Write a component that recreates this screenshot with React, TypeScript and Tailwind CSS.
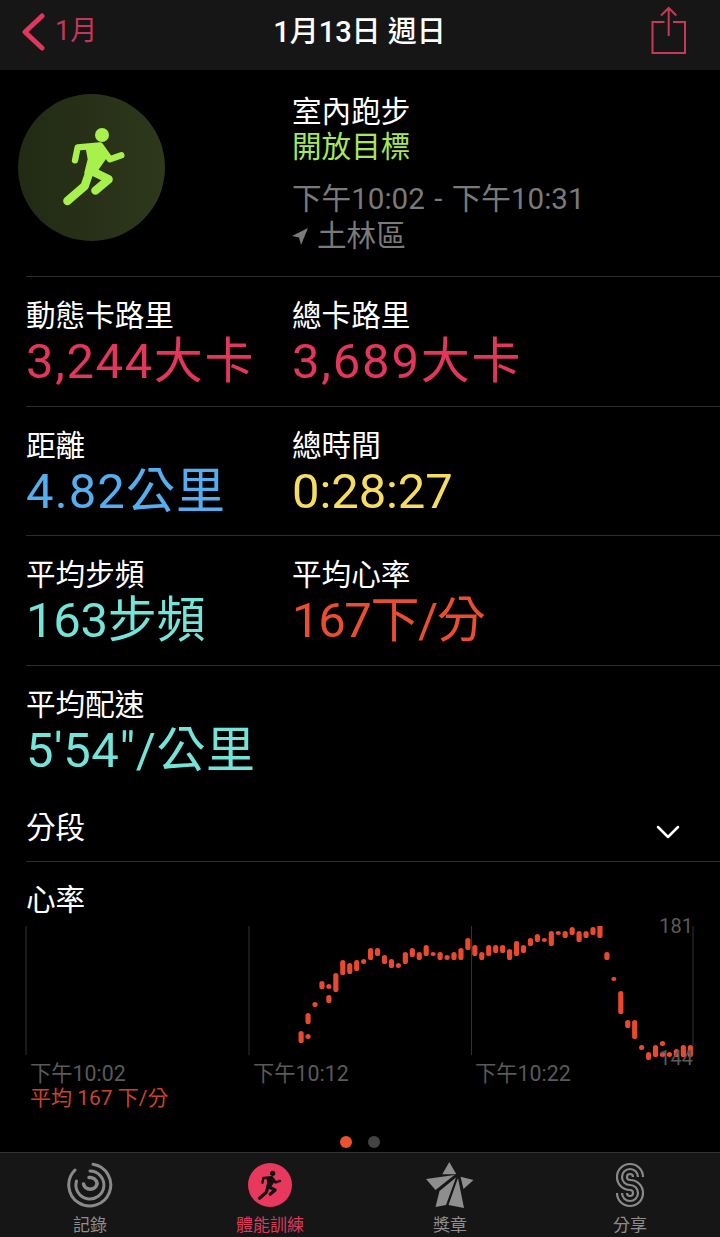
const FONT = "font-['Roboto','Noto_Sans_CJK_TC',sans-serif]";

// [top, bottom] of each heart rate mark, one group per time slot
const HEART_RATE: [number, number][][] = [
  [[1031, 1043]], [[1034, 1039], [1013, 1024]], [[1002, 1007]], [[981, 989]], [[984, 989], [995, 1003]],
  [[973, 992]], [[960, 975]], [[963, 974]], [[960, 971]], [[959, 964]], [[948, 960]], [[948, 956]],
  [[955, 964]], [[959, 968]], [[963, 968]], [[952, 964]], [[948, 957]], [[952, 960]], [[945, 956]],
  [[952, 956]], [[952, 960]], [[955, 960]], [[952, 960]], [[948, 960]], [[938, 950]], [[945, 956]],
  [[952, 960]], [[945, 956]], [[945, 953]], [[945, 953]], [[949, 960]], [[941, 956]], [[945, 953]],
  [[938, 946]], [[934, 942]], [[938, 942]], [[931, 946]], [[931, 935]], [[931, 938]], [[927, 935]],
  [[931, 942]], [[931, 938]], [[927, 935]], [[924, 938]], [[952, 960]], [[977, 981]], [[991, 1014]],
  [[1020, 1028]], [[1020, 1039]], [[1045, 1050]], [[1052, 1060]], [[1045, 1057]], [[1041, 1046], [1052, 1057]],
  [[1052, 1057]], [[1049, 1057]], [[1045, 1057]], [[1045, 1057]],
];

function Runner({ className, color }: { className: string; color: string }) {
  return (
    <svg viewBox="0 0 270 300" className={className} fill="none" stroke={color} strokeLinecap="round" strokeLinejoin="round">
      <circle cx="156" cy="57" r="21" fill={color} stroke="none" />
      <path d="M75 133 L83 94 L150 88 L180 130 L214 118" strokeWidth="19" />
      <path d="M118 170 L104 210 L52 255" strokeWidth="25" />
      <path d="M125 165 L176 190 L136 224" strokeWidth="25" />
      <path d="M112 96 L150 90 L165 125 L132 172 L108 170 L118 130 Z" fill={color} strokeWidth="10" />
    </svg>
  );
}

function Rings() {
  return (
    <svg width="46" height="46" viewBox="0 0 46 46" fill="none" stroke="#8a8a8a" strokeWidth="3" strokeLinecap="round">
      <path d="M8 8 A 21 21 0 1 0 26 2.200" />
      <path d="M23 9 A 14 14 0 1 1 9.500 19" />
      <path d="M16.500 22 A 7 7 0 0 0 30 22" strokeWidth="3.500" />
      <path d="M22 15.500 A 7 7 0 0 1 30 21" strokeWidth="3.500" />
    </svg>
  );
}

function Star() {
  return (
    <svg width="48" height="46" viewBox="0 0 48 46" fill="#8e8e8e">
      <polygon points="23.300,0 30.300,12.300 16.300,12.300" />
      <polygon points="0,17 28.500,13 9.500,28" />
      <polygon points="34.500,14.700 47.500,18 37.500,27" />
      <polygon points="9.500,45 13.500,29 30,15.500 20,43" />
      <polygon points="32,16 38,46 22.500,43" />
    </svg>
  );
}

function ShareRings() {
  return (
    <svg width="30" height="46" viewBox="-15 -23 30 46" fill="none" stroke="#8a8a8a" strokeWidth="2.200">
      <path d="M3 -8 A 3 3 0 1 0 0 -5 A 13 13 0 1 1 -13 8" />
      <path d="M8 -8 A 8 8 0 1 0 0 0 A 8 8 0 1 1 -8 8" />
      <path d="M13 -8 A 13 13 0 1 0 0 5 A 3 3 0 1 1 -3 8" />
    </svg>
  );
}

function Stat({ label, value, valueClass }: { label: string; value: string; valueClass: string }) {
  return (
    <div className="flex flex-col">
      <div className="text-[29.600px] leading-[36px] text-white">{label}</div>
      <div className={`text-[49px] leading-[56px] ${valueClass}`}>{value}</div>
    </div>
  );
}

function StatRow({ children }: { children: React.ReactNode }) {
  return <div className="grid grid-cols-[266px_1fr] ml-[26px] pt-[21px] h-[129.500px] border-b border-[#2c2c2c]">{children}</div>;
}

function HeartChart() {
  return (
    <div className="relative h-[226px]">
      <svg width="720" height="140" viewBox="0 926 720 140" className="block">
        {[26, 249, 471.5, 693].map((x) => (
          <line key={x} x1={x} x2={x} y1="926" y2="1055" stroke="#333" />
        ))}
        {HEART_RATE.map((marks, i) =>
          marks.map(([top, bottom]) => (
            <rect key={`${i}-${top}`} x={298.500 + i * 6.95} y={top} width="5.200" height={bottom - top} rx="2.600" fill="#e9492e" />
          )),
        )}
      </svg>
      <span className="absolute right-[27px] top-[-12px] text-[20px] leading-6 text-[#5a5a5a]">181</span>
      <span className="absolute right-[27px] top-[120px] text-[20px] leading-6 text-[#5a5a5a]">144</span>
      <span className="absolute left-[30px] top-[136px] text-[21.300px] leading-6 text-[#5a5a5a]">下午10:02</span>
      <span className="absolute left-[253px] top-[136px] text-[21.300px] leading-6 text-[#5a5a5a]">下午10:12</span>
      <span className="absolute left-[475px] top-[136px] text-[21.300px] leading-6 text-[#5a5a5a]">下午10:22</span>
      <span className="absolute left-[30px] top-[160px] text-[21px] leading-6 text-[#c6442c]">平均 167 下/分</span>
      <span className="absolute left-[340px] top-[210px] w-3 h-3 rounded-full bg-[#ea5230]" />
      <span className="absolute left-[368px] top-[210px] w-3 h-3 rounded-full bg-[#444]" />
    </div>
  );
}

function Tab({ icon, label, active }: { icon: React.ReactNode; label: string; active?: boolean }) {
  return (
    <div className="flex flex-col items-center w-[180px]">
      <div className="h-[46px] flex items-center justify-center">{icon}</div>
      <div className={`text-[17px] leading-[24px] mt-[5px] ${active ? "text-[#d93a5c]" : "text-[#8e8e8e]"}`}>{label}</div>
    </div>
  );
}

export default function App() {
  return (
    <div className={`w-[720px] h-[1237px] bg-black overflow-hidden flex flex-col ${FONT}`}>
      <header className="relative h-[70px] bg-[#161616] flex items-center justify-center shrink-0">
        <div className="absolute left-[20px] top-[12px] flex items-center gap-[10px]">
          <svg width="25" height="38" viewBox="0 0 25 38" fill="none" stroke="#e0375f" strokeWidth="5" strokeLinecap="round" strokeLinejoin="round">
            <path d="M22 3 L5 19 L22 35" />
          </svg>
          <span className="text-[27px] text-[#c2375a] mt-[-1px]">1月</span>
        </div>
        <span className="text-[29px] leading-[36px] font-medium text-white mt-[-6px] ml-[-1px]">1月13日 週日</span>
        <svg className="absolute left-[650px] top-[5px]" width="38" height="50" viewBox="650 5 38 50" fill="none" stroke="#c43a58" strokeWidth="2">
          <path d="M664.500 22 H652.500 V53 H685 V22 H673" />
          <path d="M668.700 36 V8 M661 15.500 L668.700 8 L676.300 15.500" />
        </svg>
      </header>

      <section className="ml-[26px] h-[207px] border-b border-[#2c2c2c] pt-[24px] pl-[266px] relative text-[29.600px] leading-[36px]">
        <div className="absolute left-[-8px] top-[24px] w-[147px] h-[147px] rounded-full bg-linear-to-r from-[#222a14] to-[#2e381b]">
          <Runner className="absolute left-[32px] top-[22px] w-[90px] h-[100px]" color="#a8f04c" />
        </div>
        <div className="text-white">室內跑步</div>
        <div className="text-[#a6e75b] mt-[-1px]">開放目標</div>
        <div className="text-[#7a7a7a] mt-[16px] mb-px [word-spacing:2px]">下午10:02 - 下午10:31</div>
        <div className="text-[#7a7a7a] flex items-center gap-[9px]">
          <svg width="16" height="18" viewBox="0 0 16 18" fill="#7a7a7a">
            <path d="M16 1 L0 9 L7 10.500 L9 18 Z" />
          </svg>
          土林區
        </div>
      </section>

      <StatRow>
        <Stat label="動態卡路里" value="3,244大卡" valueClass="text-[#e2365b] tracking-[1.600px]" />
        <Stat label="總卡路里" value="3,689大卡" valueClass="text-[#e2365b] tracking-[1.800px]" />
      </StatRow>
      <StatRow>
        <Stat label="距離" value="4.82公里" valueClass="text-[#55aef0] tracking-[1.100px]" />
        <Stat label="總時間" value="0:28:27" valueClass="text-[#f6dd62] tracking-[-0.100px]" />
      </StatRow>
      <StatRow>
        <Stat label="平均步頻" value="163步頻" valueClass="text-[#74e3d8] tracking-[-0.300px]" />
        <Stat label="平均心率" value="167下/分" valueClass="text-[#ea4e31] tracking-[-1.400px]" />
      </StatRow>

      <div className="ml-[26px] pt-[21px]">
        <Stat label="平均配速" value={`5'54"/公里`} valueClass="text-[#74e3d8] tracking-[0.550px]" />
      </div>

      <div className="ml-[26px] mt-[23px] h-[60px] pb-[5px] border-b border-[#2c2c2c] flex items-center justify-between pr-[40px] text-[29.600px] text-white">
        分段
        <svg className="mt-[7px]" width="24" height="14" viewBox="0 0 24 14" fill="none" stroke="#fff" strokeWidth="2.500" strokeLinecap="round" strokeLinejoin="round">
          <path d="M2 2 L12 12 L22 2" />
        </svg>
      </div>

      <div className="ml-[26px] text-[29.600px] leading-[36px] text-white mt-[20px] mb-[8px]">心率</div>
      <HeartChart />

      <nav className="h-[85px] bg-[#161616] border-t border-[#333] flex justify-start pt-[9px] shrink-0">
        <Tab icon={<Rings />} label="記錄" />
        <Tab
          active
          label="體能訓練"
          icon={
            <div className="w-[44px] h-[44px] rounded-full bg-[#e9385e] flex items-center justify-center">
              <Runner className="w-[34px] h-[38px]" color="#111" />
            </div>
          }
        />
        <Tab icon={<Star />} label="獎章" />
        <Tab icon={<ShareRings />} label="分享" />
      </nav>
    </div>
  );
}
